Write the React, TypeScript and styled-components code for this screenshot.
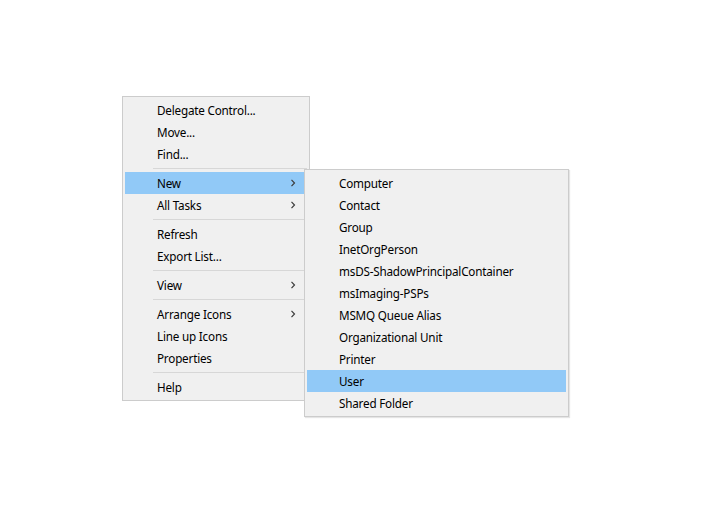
import React from "react";
import styled, { createGlobalStyle } from "styled-components";

const Global = createGlobalStyle`
  html, body { margin: 0; padding: 0; background: #ffffff; }
  body { font-family: "Noto Sans", "Open Sans", sans-serif; }
`;

const Page = styled.div`
  width: 710px;
  height: 525px;
  padding: 96px 0 0 122px;
  box-sizing: border-box;
`;

const Menu = styled.div<{ $width: number }>`
  position: relative;
  width: ${(p) => p.$width}px;
  box-sizing: border-box;
  background: #f0f0f0;
  border: 1px solid #cccccc;
  padding: 2px;
  display: flex;
  flex-direction: column;
`;

const SubMenu = styled(Menu)`
  position: absolute;
  left: 181px;
  top: 72px;
  z-index: 2;
  box-shadow: 1px 1px 1px rgba(0, 0, 0, 0.1);
`;

const Item = styled.div<{ $active?: boolean }>`
  height: 22px;
  display: flex;
  align-items: center;
  padding-left: 32px;
  padding-right: 8px;
  padding-bottom: 1px;
  box-sizing: border-box;
  font-size: 11.7px;
  letter-spacing: -0.2px;
  color: #000;
  background: ${(p) => (p.$active ? "#91c9f7" : "transparent")};
  white-space: nowrap;
`;

const Label = styled.span`
  flex: 1;
`;

const Sep = styled.div`
  height: 7px;
  display: flex;
  align-items: center;
  padding-left: 28px;
  &::after {
    content: "";
    flex: 1;
    height: 1px;
    background: #d7d7d7;
  }
`;

const Chevron = () => (
  <svg width="6" height="8" viewBox="0 0 6 8" style={{ marginRight: 3 }}>
    <path d="M1.5 0.8 L4.5 4 L1.5 7.2" fill="none" stroke="#3c3c3c" strokeWidth="1.2" />
  </svg>
);

type Entry = { label?: string; sub?: boolean; active?: boolean; sep?: boolean };

const mainItems: Entry[] = [
  { label: "Delegate Control..." },
  { label: "Move..." },
  { label: "Find..." },
  { sep: true },
  { label: "New", sub: true, active: true },
  { label: "All Tasks", sub: true },
  { sep: true },
  { label: "Refresh" },
  { label: "Export List..." },
  { sep: true },
  { label: "View", sub: true },
  { sep: true },
  { label: "Arrange Icons", sub: true },
  { label: "Line up Icons" },
  { label: "Properties" },
  { sep: true },
  { label: "Help" },
];

const subItems: Entry[] = [
  { label: "Computer" },
  { label: "Contact" },
  { label: "Group" },
  { label: "InetOrgPerson" },
  { label: "msDS-ShadowPrincipalContainer" },
  { label: "msImaging-PSPs" },
  { label: "MSMQ Queue Alias" },
  { label: "Organizational Unit" },
  { label: "Printer" },
  { label: "User", active: true },
  { label: "Shared Folder" },
];

const renderEntries = (list: Entry[]) =>
  list.map((e, i) =>
    e.sep ? (
      <Sep key={i} />
    ) : (
      <Item key={i} $active={e.active}>
        <Label>{e.label}</Label>
        {e.sub && <Chevron />}
      </Item>
    )
  );

export default function App() {
  return (
    <Page>
      <Global />
      <Menu $width={188}>
        {renderEntries(mainItems)}
        <SubMenu $width={265}>{renderEntries(subItems)}</SubMenu>
      </Menu>
    </Page>
  );
}
